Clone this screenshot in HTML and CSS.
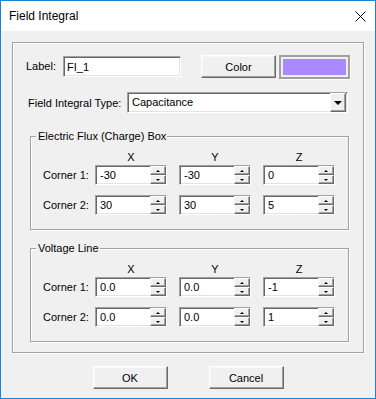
FILE: index.html
```html
<!DOCTYPE html>
<html lang="en">
<head>
    <meta charset="UTF-8">
    <title>Field Integral</title>
    <link rel="stylesheet" href="styles.css">
</head>
<body>

    <div class="window">
        <div class="titlebar">
            <span class="title">Field Integral</span>
            <svg class="close" width="11" height="11" viewBox="0 0 11 11">
                <path d="M0.5 0.5L10.5 10.5M10.5 0.5L0.5 10.5" stroke="#000" stroke-width="1" fill="none"/>
            </svg>
        </div>

        <div class="client">
            <div class="frame">
                <div class="row-label">
                    <label class="lbl-label" for="label">Label:</label>
                    <input class="edit edit-label" id="label" type="text" value="FI_1">
                    <button class="btn btn-color">Color</button>
                    <div class="swatch"><div class="swatch-fill"></div></div>
                </div>

                <div class="row-type">
                    <label class="lbl-type">Field Integral Type:</label>
                    <div class="combo">
                        <span class="combo-text">Capacitance</span>
                        <span class="combo-btn"><span class="arrow-down"></span></span>
                    </div>
                </div>

                <fieldset class="group">
                    <legend>Electric Flux (Charge) Box</legend>
                    <div class="coords">
                        <div class="hdr-row">
                            <span></span><span class="hdr">X</span><span class="hdr">Y</span><span class="hdr">Z</span>
                        </div>
                        <div class="crow">
                            <span class="corner">Corner 1:</span>
                            <div class="spin"><input type="text" value="-30"><div class="spin-btns"><span class="spin-btn"><span class="tri-up"></span></span><span class="spin-btn"><span class="tri-down"></span></span></div></div>
                            <div class="spin"><input type="text" value="-30"><div class="spin-btns"><span class="spin-btn"><span class="tri-up"></span></span><span class="spin-btn"><span class="tri-down"></span></span></div></div>
                            <div class="spin"><input type="text" value="0"><div class="spin-btns"><span class="spin-btn"><span class="tri-up"></span></span><span class="spin-btn"><span class="tri-down"></span></span></div></div>
                        </div>
                        <div class="crow">
                            <span class="corner">Corner 2:</span>
                            <div class="spin"><input type="text" value="30"><div class="spin-btns"><span class="spin-btn"><span class="tri-up"></span></span><span class="spin-btn"><span class="tri-down"></span></span></div></div>
                            <div class="spin"><input type="text" value="30"><div class="spin-btns"><span class="spin-btn"><span class="tri-up"></span></span><span class="spin-btn"><span class="tri-down"></span></span></div></div>
                            <div class="spin"><input type="text" value="5"><div class="spin-btns"><span class="spin-btn"><span class="tri-up"></span></span><span class="spin-btn"><span class="tri-down"></span></span></div></div>
                        </div>
                    </div>
                </fieldset>

                <fieldset class="group group-voltage">
                    <legend>Voltage Line</legend>
                    <div class="coords">
                        <div class="hdr-row">
                            <span></span><span class="hdr">X</span><span class="hdr">Y</span><span class="hdr">Z</span>
                        </div>
                        <div class="crow">
                            <span class="corner">Corner 1:</span>
                            <div class="spin"><input type="text" value="0.0"><div class="spin-btns"><span class="spin-btn"><span class="tri-up"></span></span><span class="spin-btn"><span class="tri-down"></span></span></div></div>
                            <div class="spin"><input type="text" value="0.0"><div class="spin-btns"><span class="spin-btn"><span class="tri-up"></span></span><span class="spin-btn"><span class="tri-down"></span></span></div></div>
                            <div class="spin"><input type="text" value="-1"><div class="spin-btns"><span class="spin-btn"><span class="tri-up"></span></span><span class="spin-btn"><span class="tri-down"></span></span></div></div>
                        </div>
                        <div class="crow">
                            <span class="corner">Corner 2:</span>
                            <div class="spin"><input type="text" value="0.0"><div class="spin-btns"><span class="spin-btn"><span class="tri-up"></span></span><span class="spin-btn"><span class="tri-down"></span></span></div></div>
                            <div class="spin"><input type="text" value="0.0"><div class="spin-btns"><span class="spin-btn"><span class="tri-up"></span></span><span class="spin-btn"><span class="tri-down"></span></span></div></div>
                            <div class="spin"><input type="text" value="1"><div class="spin-btns"><span class="spin-btn"><span class="tri-up"></span></span><span class="spin-btn"><span class="tri-down"></span></span></div></div>
                        </div>
                    </div>
                </fieldset>
            </div>

            <div class="buttons">
                <button class="btn btn-dlg">OK</button>
                <button class="btn btn-dlg">Cancel</button>
            </div>
        </div>
    </div>

</body>
</html>
```

FILE: styles.css
```css
body {
    margin: 0;
    font-family: "Liberation Sans", Arial, sans-serif;
    font-size: 11px;
    color: #000;
    background: #fff;
}
.window {
    width: 376px;
    height: 399px;
    box-sizing: border-box;
    border: 1px solid #1883d7;
    background: #f0f0f0;
    display: flex;
    flex-direction: column;
}
.titlebar {
    height: 30px;
    background: #fff;
    display: flex;
    align-items: center;
    padding: 0 9px 0 8px;
}
.title {
    font-size: 12px;
    flex: 1;
}
.close {
    display: block;
}
.client {
    flex: 1;
}

/* etched group frames */
.frame {
    margin: 11px 0 0 11px;
    width: 352px;
    box-sizing: border-box;
    border: 1px solid #a0a0a0;
    box-shadow: 1px 1px 0 #fff, inset 1px 1px 0 #fff;
    padding: 0 0 10px;
}
.row-label {
    display: flex;
    align-items: flex-start;
    margin-top: 12px;
    padding-left: 13px;
    height: 24px;
}
.lbl-label {
    width: 37px;
    line-height: 23px;
}
.edit {
    box-sizing: border-box;
    height: 21px;
    margin: 1px 0 0;
    border: 1px solid;
    border-color: #a0a0a0 #fff #fff #a0a0a0;
    box-shadow: inset 1px 1px 0 #696969, inset -1px -1px 0 #e3e3e3;
    padding: 0 3px;
    font: inherit;
    background: #fff;
    outline: none;
}
.edit-label {
    width: 118px;
}
.btn {
    box-sizing: border-box;
    font: inherit;
    color: #000;
    background: #f0f0f0;
    border: 1px solid;
    border-color: #fff #696969 #696969 #fff;
    box-shadow: inset -1px -1px 0 #a0a0a0, inset 1px 1px 0 #f8f8f8;
    padding: 0;
}
.btn-color {
    width: 75px;
    height: 23px;
    margin-left: 20px;
}
.swatch {
    width: 71px;
    height: 24px;
    box-sizing: border-box;
    margin-left: 3px;
    border: 2px solid #a0a0a0;
    box-shadow: 1px 1px 0 #fff;
    padding: 2px;
}
.swatch-fill {
    height: 100%;
    background: #aa88ff;
}
.row-type {
    display: flex;
    align-items: center;
    margin-top: 13px;
    padding-left: 15px;
}
.lbl-type {
    width: 99px;
}
.combo {
    box-sizing: border-box;
    width: 221px;
    height: 21px;
    display: flex;
    align-items: stretch;
    border: 1px solid;
    border-color: #a0a0a0 #fff #fff #a0a0a0;
    box-shadow: inset 1px 1px 0 #696969, inset -1px -1px 0 #e3e3e3;
    background: #fff;
}
.combo-text {
    flex: 1;
    padding-left: 4px;
    line-height: 19px;
}
.combo-btn {
    box-sizing: border-box;
    width: 16px;
    margin-right: 1px;
    display: flex;
    align-items: center;
    justify-content: center;
    background: #f0f0f0;
    border: 1px solid;
    border-color: #fff #696969 #696969 #fff;
    box-shadow: inset -1px -1px 0 #a0a0a0;
}
.arrow-down {
    width: 0;
    height: 0;
    border-left: 4px solid transparent;
    border-right: 4px solid transparent;
    border-top: 4px solid #000;
}

.group {
    margin: 17px 0 0 17px;
    width: 319px;
    box-sizing: border-box;
    min-width: 0;
    border: 1px solid #a0a0a0;
    box-shadow: 1px 1px 0 #fff, inset 1px 1px 0 #fff;
    padding: 8px 0 14px;
}
.group-voltage {
    margin-top: 12px;
}
.group legend {
    margin-left: 5px;
    padding: 0 1px 0 2px;
    line-height: 13px;
    background: #f0f0f0;
}
.coords {
    margin-left: 12px;
}
.hdr-row, .crow {
    display: grid;
    grid-template-columns: 40px 72px 72px 72px;
    column-gap: 12px;
    align-items: center;
}
.corner {
    white-space: nowrap;
}
.hdr-row {
    height: 13px;
    line-height: 13px;
    margin-bottom: 1px;
}
.hdr {
    text-align: center;
}
.crow {
    height: 20px;
}
.crow + .crow {
    margin-top: 10px;
}
.spin {
    box-sizing: border-box;
    height: 20px;
    display: flex;
    border: 1px solid;
    border-color: #a0a0a0 #fff #fff #a0a0a0;
    box-shadow: inset 1px 1px 0 #696969, inset -1px -1px 0 #e3e3e3;
    background: #fff;
}
.spin input {
    flex: 1;
    min-width: 0;
    border: none;
    outline: none;
    padding: 0 0 0 4px;
    font: inherit;
    background: transparent;
}
.spin-btns {
    width: 16px;
    display: flex;
    flex-direction: column;
}
.spin-btn {
    flex: 1;
    box-sizing: border-box;
    display: flex;
    align-items: center;
    justify-content: center;
    background: #f0f0f0;
    border: 1px solid;
    border-color: #fff #696969 #696969 #fff;
    box-shadow: inset -1px -1px 0 #a0a0a0;
}
.tri-up, .tri-down {
    width: 0;
    height: 0;
    border-left: 2px solid transparent;
    border-right: 2px solid transparent;
}
.tri-up {
    border-bottom: 2px solid #000;
}
.tri-down {
    border-top: 2px solid #000;
}

.buttons {
    display: flex;
    justify-content: center;
    gap: 41px;
    margin-top: 13px;
}
.btn-dlg {
    width: 75px;
    height: 23px;
}
```
